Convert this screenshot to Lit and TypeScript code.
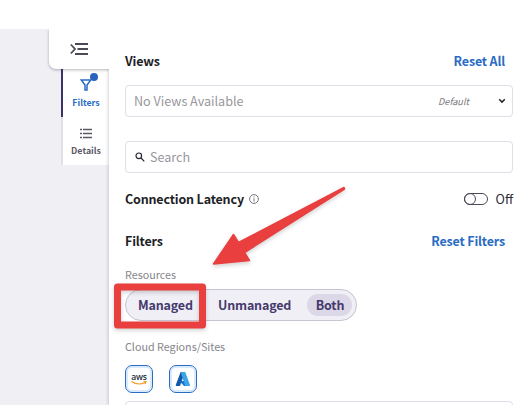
import { LitElement, html, css, svg } from "lit";
import { customElement } from "lit/decorators.js";

@customElement("app-root")
export class AppRoot extends LitElement {
  static styles = css`
    :host { display: block; position: relative; width: 521px; height: 405px; overflow: hidden; background: #efeff4;
      font-family: "Noto Sans CJK SC", "Noto Sans", sans-serif; font-size: 12.6px; line-height: 20px; color: #1e1f27; }
    * { box-sizing: border-box; }
    svg { display: block; }
    .top { height: 29px; background: #fff; }
    .body { display: flex; height: 376px; }
    .gutter { width: 49px; }
    .rail { width: 60px; display: flex; flex-direction: column; align-items: flex-end; }
    .toggle { width: 60px; height: 40px; background: #fff; border-bottom-left-radius: 7px; display: flex; align-items: center; padding-left: 21px; box-shadow: 0 1px 3px rgba(40,40,60,.35); clip-path: inset(0 0 -6px -6px); position: relative; z-index: 1; }
    .tab { width: 48px; height: 48px; background: #fff; border-left: 2px solid #e1e0e9; display: flex; flex-direction: column; align-items: center; font-size: 8.8px; font-weight: 700; line-height: 12px; color: #5b5965; padding-top: 9px; gap: 5px; }
    .tab.active { border-left-color: #3c3267; color: #2a6cc4; }
    .tabicon { height: 14px; width: 20px; position: relative; display: flex; justify-content: center; align-items: center; }
    .dot { position: absolute; width: 8px; height: 8px; border-radius: 50%; background: #2a63bd; left: 14px; top: -5px; }
    .panel { width: 412px; background: #fff; padding: 22px 8px 0 16px; box-shadow: -1px 0 3px rgba(40,40,60,.2); clip-path: inset(0 0 0 -5px); }
    .row { display: flex; align-items: center; justify-content: space-between; height: 20px; padding-right: 8px; font-weight: 700; font-size: 12.5px; letter-spacing: -.17px; }
    .link { color: #2a6cc4; }
    .field { height: 32px; border: 1px solid #dedee6; border-radius: 4px; display: flex; align-items: center; padding: 0 6px 0 8px; color: #97979c; margin-top: 14px; }
    .search { margin-top: 24px; padding-left: 9px; gap: 5px; }
    .default { margin-left: auto; margin-right: 29px; font-size: 9.2px; font-style: italic; color: #77777c; }
    .latency { margin-top: 16px; padding-right: 0; }
    .name { display: flex; align-items: center; gap: 5px; }
    .switch { display: flex; align-items: center; gap: 8px; font-weight: 400; font-size: 12.6px; letter-spacing: 0; color: #2b2a35; }
    .filters { margin-top: 22px; }
    .label { font-size: 10.75px; color: #86858c; height: 16px; line-height: 16px; margin-top: 16px; }
    .segment { width: 232px; height: 32px; margin-top: 6px; border: 1px solid #c6c4d2; border-radius: 16px; background: #f0eff5; color: #453a6d; font-weight: 700; font-size: 12.5px; letter-spacing: -.17px; display: flex; align-items: center; padding-left: 12px; }
    .option { width: 80px; }
    .option.wide { width: 89px; }
    .both { width: 45px; height: 22px; border-radius: 11px; background: #dcd8e7; text-align: center; line-height: 22px; padding-left: 1px; }
    .label.cloud { margin-top: 18px; }
    .clouds { display: flex; gap: 16px; margin-top: 10px; }
    .cloudbtn { width: 28px; height: 28px; border: 1px solid #2a6cc4; border-radius: 7px; background: #fff; box-shadow: inset 0 0 0 2px #d8eafc; display: grid; place-items: center; }
    .next { margin-top: 8px; }
    .notes { position: absolute; left: 0; top: 0; z-index: 3; filter: drop-shadow(0 2px 2px rgba(0,0,0,.18)); }
    .aws { font-family: "Open Sans", sans-serif; font-weight: 600; font-size: 8.6px; letter-spacing: -.3px; }
  `;

  render() {
    return html`
      <div class="top"></div>
      <div class="body">
        <div class="gutter"></div>
        <div class="rail">
          <div class="toggle">${svg`<svg width="19" height="14" viewBox="0 0 19 14" fill="none" stroke="#4d4a57" stroke-width="1.8"><path d="M5 2H18M7.5 7H18M5 12H18M.8 2.5L5 7L.8 11.5"/></svg>`}</div>
          <div class="tab active">
            <div class="tabicon">${svg`<svg width="12" height="12" viewBox="0 0 12 12" fill="none" stroke="#2a6cc4" stroke-width="1.5"><path d="M1.3 1H10.7L7 6V11H5V6Z"/></svg>`}<span class="dot"></span></div>
            <span>Filters</span>
          </div>
          <div class="tab">
            <div class="tabicon">${svg`<svg width="12" height="11" viewBox="0 0 12 11" stroke="#5b5965" stroke-width="1.5"><path d="M0 1.5H2M3 1.5H12M0 5.5H2M3 5.5H12M0 9.5H2M3 9.5H12"/></svg>`}</div>
            <span>Details</span>
          </div>
        </div>
        <div class="panel">
          <div class="row"><span>Views</span><span class="link">Reset All</span></div>
          <div class="field"><span>No Views Available</span><span class="default">Default</span>
            ${svg`<svg width="8" height="6" viewBox="0 0 8 6" fill="none" stroke="#25242d" stroke-width="1.5"><path d="M1.2 1.3L4 4.1L6.8 1.3"/></svg>`}
          </div>
          <div class="field search">${svg`<svg width="10" height="10" viewBox="0 0 10 10" fill="none" stroke="#25242d" stroke-width="1.2"><circle cx="3.8" cy="3.8" r="2.8"/><path d="M6 6L9.3 9.3"/></svg>`}<span>Search</span></div>
          <div class="row latency">
            <span class="name">Connection Latency ${svg`<svg width="10" height="10" viewBox="0 0 10 10" fill="none" stroke="#67666e" stroke-width=".9"><circle cx="5" cy="5" r="4.4"/><path d="M5 4.3V7.5M5 2.4V3.4"/></svg>`}</span>
            <span class="switch">${svg`<svg width="24" height="12" viewBox="0 0 24 12" fill="none" stroke="#4d4a57"><rect x=".5" y=".5" width="23" height="11" rx="5.5"/><circle cx="6" cy="6" r="5.5"/></svg>`}<span>Off</span></span>
          </div>
          <div class="row filters"><span>Filters</span><span class="link">Reset Filters</span></div>
          <div class="label">Resources</div>
          <div class="segment"><span class="option">Managed</span><span class="option wide">Unmanaged</span><span class="both">Both</span></div>
          <div class="label cloud">Cloud Regions/Sites</div>
          <div class="clouds">
            <div class="cloudbtn">${svg`<svg width="20" height="16" viewBox="0 0 20 16"><text class="aws" x="10" y="9" text-anchor="middle" fill="#252f3e">aws</text><path d="M2.5 10.5Q9.5 15 16 11.5M14.5 10.5H17L16.2 13" fill="none" stroke="#f59b22" stroke-width="1.1"/></svg>`}</div>
            <div class="cloudbtn">${svg`<svg width="16" height="16" viewBox="0 0 16 16"><path d="M5.6 1H10L5 15H1.4Q.5 15 .8 14Z" fill="#1558a8"/><path d="M4.5 10H11L12 15H9Z" fill="#1673cf"/><path d="M6.5 1H10.2L15 14Q15.2 15 14.3 15H10.2L6 2Z" fill="#3aa5e8"/></svg>`}</div>
          </div>
          <div class="field next"></div>
        </div>
      </div>
      ${svg`<svg class="notes" width="521" height="405" viewBox="0 0 521 405"><rect x="117.5" y="287" width="85" height="38" fill="none" stroke="#e93f3f" stroke-width="7" stroke-linejoin="round"/><path d="M344 187.5L238.5 242.5L233.5 234.5L213.5 264L249.5 260.5L244.5 252.5L344.5 189Z" fill="#e93f3f" stroke="#e93f3f" stroke-width="1.5" stroke-linejoin="round"/></svg>`}
    `;
  }
}
